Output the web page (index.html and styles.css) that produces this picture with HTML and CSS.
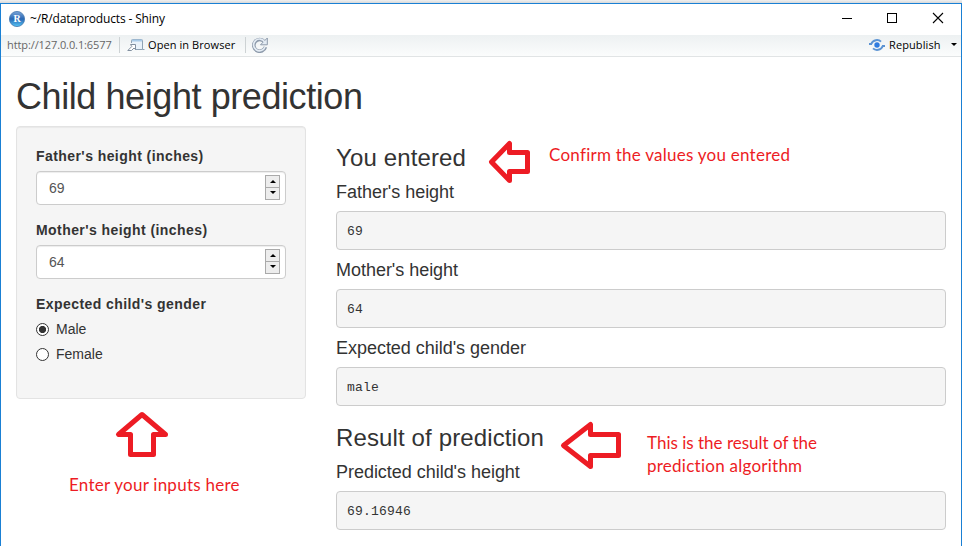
FILE: index.html
```html
<!DOCTYPE html>
<html lang="en">
<head>
<meta charset="utf-8">
<title>~/R/dataproducts - Shiny</title>
<link rel="stylesheet" href="styles.css">
</head>
<body>
<div class="window">
  <header class="titlebar">
    <svg class="logo" width="16" height="16" viewBox="0 0 16 16">
      <defs><linearGradient id="ball" x1="0" y1="0" x2="0" y2="1"><stop offset="0" stop-color="#7aa5d8"/><stop offset=".5" stop-color="#2968b5"/><stop offset="1" stop-color="#55c5f5"/></linearGradient></defs>
      <circle cx="8" cy="8" r="7.6" fill="url(#ball)" stroke="#4477ae" stroke-width=".8"/>
      <text class="logo-letter" x="8.2" y="11.4" text-anchor="middle">R</text>
    </svg>
    <span class="window-title">~/R/dataproducts - Shiny</span>
    <svg class="controls" width="104" height="12" viewBox="0 0 104 12" fill="none" stroke="#000" shape-rendering="crispEdges">
      <path d="M0 6.500h10M45.500 1.500h9v9h-9z"/>
      <path d="M91 1l10 10M101 1L91 11" shape-rendering="auto" stroke-width="1.100"/>
    </svg>
  </header>
  <nav class="toolbar">
    <span class="url">http://127.0.0.1:6577</span>
    <i class="divider"></i>
    <svg class="open-icon" width="18" height="14" viewBox="0 0 18 14" fill="none" stroke="#8fa3b5">
      <path d="M4.500 5V2.500q0-1 1-1h9q1 0 1 1v9H8" fill="#e9f2fa"/><path d="M5 2.500h10" stroke="#a9cbe8" stroke-width="2"/><path d="M15.500 11.500h2" />
      <path d="M.8 12.500l4-4L3.500 6.500h5v5L7 10l-2.500 2.500z" fill="#fff" stroke="#8290a0"/>
    </svg>
    <span class="open">Open in Browser</span>
    <i class="divider"></i>
    <svg class="refresh" width="16" height="16" viewBox="0 0 16 16" fill="none">
      <path d="M12.300 4.600A5.900 5.900 0 1 0 13.400 10" stroke="#8d9aab" stroke-width="3.600"/>
      <path d="M15.300 1v6.800H8.500z" fill="#e4ecf4" stroke="#8d9aab"/>
      <path d="M12.600 5A5.900 5.900 0 1 0 13 10" stroke="#e4ecf4" stroke-width="1.700"/>
    </svg>
    <span class="republish">
      <svg width="16" height="12" viewBox="0 0 16 12" fill="none" stroke="#5b93d3" stroke-width="2">
        <path d="M0 5h2.200C4 .4 9.500.2 12 2.600M16 7h-2.200C12 11.600 6.500 11.800 4 9.400"/><circle cx="8" cy="6" r="2.700" fill="#2f7ce0" stroke="none"/>
      </svg>
      <span class="republish-text">Republish</span>
      <i class="caret"></i>
    </span>
  </nav>
  <main class="page">
    <h2>Child height prediction</h2>
    <div class="row">
      <form class="well">
        <label class="name">Father's height (inches)</label>
        <div class="field"><span>69</span><span class="spinner"><i class="up"></i><i class="down"></i></span></div>
        <label class="name">Mother's height (inches)</label>
        <div class="field"><span>64</span><span class="spinner"><i class="up"></i><i class="down"></i></span></div>
        <label class="name">Expected child's gender</label>
        <div class="radio"><i class="dot checked"></i>Male</div>
        <div class="radio"><i class="dot"></i>Female</div>
      </form>
      <section class="results">
        <h3>You entered</h3>
        <h4>Father's height</h4>
        <pre>69</pre>
        <h4>Mother's height</h4>
        <pre>64</pre>
        <h4>Expected child's gender</h4>
        <pre>male</pre>
        <h3 class="second">Result of prediction</h3>
        <h4>Predicted child's height</h4>
        <pre>69.16946</pre>
      </section>
    </div>
  </main>
</div>
<svg class="arrows" width="962" height="546" viewBox="0 0 962 546">
  <path d="M142 414.500L118.500 434.500H130.500V454.500H153.500V434.500H165.500Z"/>
  <path d="M491.500 162L509.500 143.500V152.500H527.500V171.500H509.500V180.500Z"/>
  <path d="M563.500 445.500L590.500 424.500V434.500H618.500V455.500H590.500V466.500Z"/>
</svg>
<div class="note note-inputs">Enter your inputs here</div>
<div class="note note-confirm">Confirm the values you entered</div>
<div class="note note-result"><span class="line1">This is the result of the</span><br>prediction algorithm</div>
</body>
</html>
```
FILE: styles.css
```css
* { box-sizing: border-box; }
html { height: 100%; }
body {
  margin: 0;
  height: 546px;
  overflow: hidden;
  padding-top: 3px;
  background: linear-gradient(#f0f0f0, #d9d9d9 3px, #fff 3px);
  font: 14px/20px "Liberation Sans", Arial, sans-serif;
  color: #333;
}
.window { height: 543px; border: 1px solid #1a80d4; border-bottom: 0; background: #fff; }
.titlebar { height: 31px; display: flex; align-items: center; padding: 0 15px 0 8px; color: #000; }
.logo { margin-top: -2px; }
.logo-letter { font: bold 10px "Liberation Serif", serif; fill: #fff; }
.window-title { font: 12px/16px "Open Sans", sans-serif; margin: -1px 0 0 5px; letter-spacing: -.15px; white-space: nowrap; }
.controls { margin-left: auto; margin-top: -3px; }
.toolbar {
  height: 22px; display: flex; align-items: center;
  padding: 0 4px 2px 6px;
  background: linear-gradient(#edf1f2, #fbfcfc);
  border-bottom: 1px solid #e1e4e5;
  font: 11px/16px "Open Sans", sans-serif;
  color: #000; white-space: nowrap;
}
.url { width: 105px; color: #666; letter-spacing: -.1px; }
.divider { width: 1px; height: 16px; margin-left: 7px; background: #cdd2d4; }
.open-icon { margin-left: 7px; }
.open { width: 90px; margin-left: 3px; letter-spacing: .08px; }
.refresh { margin-left: 6px; }
.republish { margin-left: auto; display: flex; align-items: center; }
.republish-text { width: 54px; margin-left: 4px; letter-spacing: .1px; }
.caret { margin-left: 8px; border: 3px solid transparent; border-top-color: #000; border-bottom: 0; }
.page { padding: 0 15px; }
h2, h3, h4 { margin: 0; font-weight: 400; white-space: nowrap; }
h2 { height: 69px; padding-top: 20px; font-size: 36px; line-height: 40px; letter-spacing: -.42px; }
.row { display: flex; gap: 30px; align-items: flex-start; }
.well {
  width: 290px; height: 273px; padding: 19px;
  border: 1px solid #e3e3e3; border-radius: 4px;
  background: #f5f5f5; box-shadow: inset 0 1px 1px rgba(0,0,0,.05);
}
.name { display: block; width: max-content; height: 20px; margin-bottom: 5px; font-weight: 700; letter-spacing: .43px; }
.field {
  height: 34px; margin-bottom: 15px; padding: 0 5px 0 12px;
  display: flex; align-items: center; justify-content: space-between;
  background: #fff; border: 1px solid #ccc; border-radius: 4px;
  box-shadow: inset 0 1px 1px rgba(0,0,0,.075); color: #555;
}
.spinner { width: 15px; height: 25px; border: 1px solid #aaa; background: #ededed; margin-top: -2px; display: grid; grid-template-rows: 12px 11px; justify-items: center; align-items: center; }
.spinner .up { grid-area: 1 / 1; border: 3px solid transparent; border-top: 0; border-bottom-color: #000; }
.spinner .down { margin-top: -1px; border: 3px solid transparent; border-bottom: 0; border-top-color: #000; }
.spinner::before { content: ""; grid-area: 1 / 1; align-self: end; width: 100%; height: 1px; background: #aaa; }
.radio { display: flex; align-items: center; height: 20px; margin-bottom: 5px; }
.dot { width: 13px; height: 13px; margin-right: 7px; border: 1px solid #333; border-radius: 50%; background: #fff; }
.checked { background: radial-gradient(circle, #333 3.3px, #fff 3.9px); }
.results { width: 610px; padding-top: 19px; }
h3 { height: 26px; line-height: 26px; font-size: 24px; margin-bottom: 11px; letter-spacing: .13px; }
h3.second { margin-top: 19px; }
h4 { height: 19px; line-height: 20px; font-size: 18px; margin-bottom: 10px; letter-spacing: -.03px; }
pre {
  height: 39px; margin: 0 0 10px; padding: 10px;
  border: 1px solid #ccc; border-radius: 4px; background: #f5f5f5;
  font: 13px/19px "Liberation Mono", monospace; color: #333; letter-spacing: .2px;
}
.arrows { position: absolute; left: 0; top: 0; fill: #fff; stroke: #ed1c24; stroke-width: 5; stroke-linejoin: round; }
.note { position: absolute; color: #ed1c24; font: 17px/23px Lato, sans-serif; letter-spacing: .25px; white-space: nowrap; }
.line1 { letter-spacing: 0; }
.note-inputs { left: 69px; top: 473px; }
.note-confirm { left: 549px; top: 143px; }
.note-result { left: 647px; top: 431px; }
```
